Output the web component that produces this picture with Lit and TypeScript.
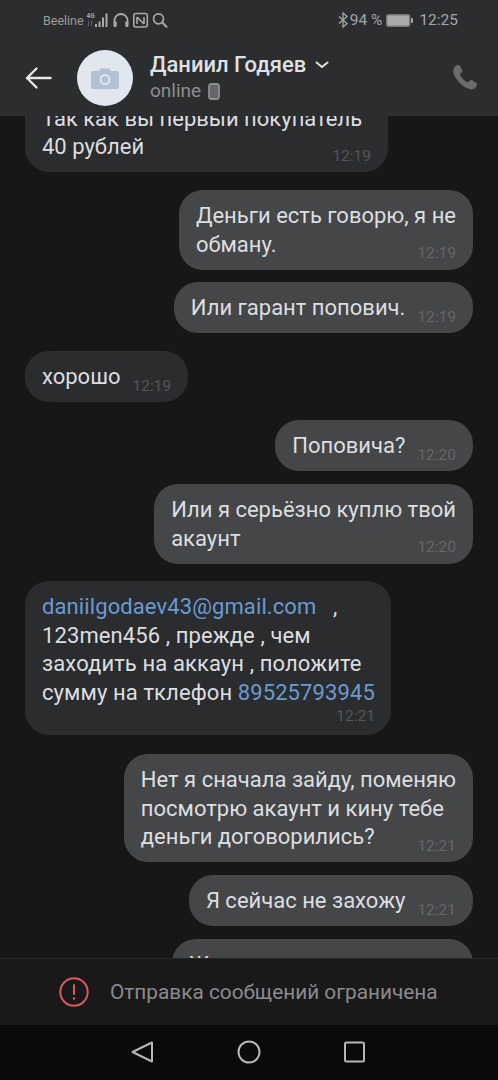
import { LitElement, html, css } from "lit";
import { customElement } from "lit/decorators.js";

type Msg = { out?: boolean; lines: unknown[]; time: string; cls?: string };

const link = (t: string) => html`<span class="link">${t}</span>`;

const MSGS: Msg[] = [
  { lines: ["Так как вы первый покупатель", "40 рублей"], time: "12:19", cls: "w1" },
  { out: true, lines: ["Деньги есть говорю, я не", "обману."], time: "12:19", cls: "g18" },
  { out: true, lines: ["Или гарант попович."], time: "12:19", cls: "g12" },
  { lines: ["хорошо"], time: "12:19", cls: "g18" },
  { out: true, lines: ["Поповича?"], time: "12:20", cls: "g18" },
  { out: true, lines: ["Или я серьёзно куплю твой", "акаунт"], time: "12:20", cls: "g13" },
  {
    lines: [
      html`${link("daniilgodaev43@gmail.com")}&nbsp;&nbsp;&nbsp;,`,
      "123men456 , прежде , чем",
      "заходить на аккаун , положите",
      html`сумму на тклефон ${link("89525793945")}`,
    ],
    time: "12:21",
    cls: "g17 own",
  },
  { out: true, lines: ["Нет я сначала зайду, поменяю", "посмотрю акаунт и кину тебе", "деньги договорились?"], time: "12:21", cls: "g19" },
  { out: true, lines: ["Я сейчас не захожу"], time: "12:21", cls: "g13" },
  { out: true, lines: ["Жду, пока ты там"], time: "12:21", cls: "g12 w10" },
];

@customElement("app-root")
export class AppRoot extends LitElement {
  static styles = css`
    :host {
      display: flex;
      flex-direction: column;
      width: 498px;
      height: 1080px;
      overflow: hidden;
      background: #171718;
      font-family: Roboto, "Liberation Sans", sans-serif;
      color: #dcdee1;
    }
    .top {
      flex: none;
      height: 116px;
      background: #2c2d2f;
      display: flex;
      flex-direction: column;
      position: relative;
      z-index: 1;
    }
    .status {
      height: 40px;
      display: flex;
      align-items: center;
      justify-content: space-between;
      padding: 0 40px 0 43px;
    }
    .st-l, .st-r { display: flex; align-items: center; }
    .carrier { font-size: 12.5px; color: #9a9b9d; margin-right: 2px; }
    .st-r { font-size: 15.5px; color: #a5a6a8; }
    .batt { margin-left: 4px; }
    .bt { margin-right: 2px; }
    .clock { margin-left: 5px; }
    .bar {
      flex: 1;
      display: flex;
      align-items: flex-start;
      padding-left: 24px;
      padding-right: 18px;
    }
    .back { margin-top: 26px; flex: none; }
    .avatar {
      flex: none;
      width: 56px;
      height: 56px;
      border-radius: 50%;
      background: #e0e7ee;
      margin: 10px 0 0 25px;
      display: flex;
      align-items: center;
      justify-content: center;
    }
    .who { flex: 1; margin: 11px 0 0 17px; }
    .name {
      font-size: 22px;
      line-height: 28px;
      font-weight: 500;
      color: #dfe1e4;
      display: flex;
      align-items: center;
      gap: 9px;
    }
    .online {
      font-size: 19px;
      line-height: 24px;
      color: #8d8e90;
      display: flex;
      align-items: center;
      gap: 7px;
    }
    .phone { margin-top: 22px; flex: none; }
    .chat { flex: 1; min-height: 0; overflow: hidden; }
    .list {
      margin-top: -23.5px;
      padding: 0 25px;
      display: flex;
      flex-direction: column;
    }
    .msg {
      align-self: flex-start;
      background: #2b2c2e;
      border-radius: 24px;
      padding: 12px 17px 10.5px;
      font-size: 22px;
      line-height: 28.5px;
      white-space: nowrap;
      display: flex;
      flex-direction: column;
    }
    .msg.out { align-self: flex-end; background: #454647; }
    .w1 { width: 329px; }
    .w10 { width: 267px; }
    .g12 { margin-top: 12.5px; }
    .g13 { margin-top: 13px; }
    .g17 { margin-top: 17.5px; }
    .g18 { margin-top: 18px; }
    .g19 { margin-top: 19px; }
    .line { display: flex; justify-content: space-between; }
    .time {
      flex: none;
      margin-left: 12px;
      align-self: flex-end;
      font-size: 15.5px;
      line-height: 19px;
      margin-bottom: -4px;
      color: #545557;
    }
    .out .time { color: #656668; }
    .own { letter-spacing: 0.1px; padding-right: 16px; }
    .own .stamp { display: flex; justify-content: flex-end; height: 17.5px; }
    .own .time { margin-bottom: -1px; letter-spacing: 0; }
    .link { color: #6a9bd2; }
    .foot {
      flex: none;
      height: 66px;
      border-top: 1px solid #262628;
      background: #19191a;
      display: flex;
      align-items: center;
      padding-left: 59px;
      gap: 21px;
      font-size: 20.8px;
      color: #8a8b8d;
    }
    .nav {
      flex: none;
      height: 55px;
      background: #0a0a0a;
      display: flex;
      align-items: center;
      padding-left: 131px;
      padding-bottom: 2px;
      box-sizing: border-box;
    }
    .nav svg { display: block; }
  `;

  private bubble(m: Msg) {
    const t = html`<span class="time">${m.time}</span>`;
    const own = (m.cls ?? "").includes("own");
    const last = m.lines.length - 1;
    return html`<div class="msg ${m.out ? "out" : ""} ${m.cls ?? ""}">
      ${m.lines.map((l, i) =>
        i === last && !own
          ? html`<div class="line"><span>${l}</span>${t}</div>`
          : html`<div>${l}</div>`
      )}
      ${own ? html`<div class="stamp">${t}</div>` : ""}
    </div>`;
  }

  render() {
    return html`
      <div class="top">
        <div class="status">
          <div class="st-l">
            <span class="carrier">Beeline</span>
            <svg width="82" height="16" viewBox="0 0 82 16">
              <text x="0.500" y="5.500" font-size="6.500" font-weight="700" fill="#a0a1a3" font-family="Roboto">4G</text>
              <path d="M2.500 9v5M5.500 9v5" stroke="#66676a" stroke-width="1"/>
              <g fill="#a8a9ab">
                <rect x="9" y="12" width="2" height="3"/>
                <rect x="12.500" y="9.500" width="2" height="5.500"/>
                <rect x="16" y="5.500" width="2" height="9.500"/>
                <rect x="19.500" y="1.500" width="2" height="13.500"/>
              </g>
              <path d="M28.500 11V8.500a6.500 6.500 0 0 1 13 0V11" fill="none" stroke="#a8a9ab" stroke-width="1.800"/>
              <rect x="27.500" y="9.500" width="3.200" height="5.500" rx="1" fill="#a8a9ab"/>
              <rect x="39.300" y="9.500" width="3.200" height="5.500" rx="1" fill="#a8a9ab"/>
              <rect x="47.800" y="1.500" width="13.500" height="13.500" rx="2" fill="none" stroke="#a8a9ab" stroke-width="1.600"/>
              <path d="M51 5v7M51 5l7 7M58 5v7" fill="none" stroke="#a8a9ab" stroke-width="1.600"/>
              <circle cx="72.500" cy="6.800" r="5" fill="none" stroke="#a8a9ab" stroke-width="1.700"/>
              <path d="M76.200 10.500l4.300 4.300" stroke="#a8a9ab" stroke-width="2" stroke-linecap="round"/>
            </svg>
          </div>
          <div class="st-r">
            <svg class="bt" width="10" height="16" viewBox="0 0 10 16">
              <path d="M1 4.500l8 7-4 3.500V1l4 3.500-8 7" fill="none" stroke="#a5a6a8" stroke-width="1.300"/>
            </svg>
            <span>94 %</span>
            <svg class="batt" width="28" height="13" viewBox="0 0 28 13">
              <rect x="0.700" y="0.700" width="23" height="11.600" rx="2" fill="#a8a9ab" stroke="#77787a" stroke-width="1.400"/>
              <rect x="25" y="4" width="2" height="5" rx="0.800" fill="#a5a6a8"/>
            </svg>
            <span class="clock">12:25</span>
          </div>
        </div>
        <div class="bar">
          <svg class="back" width="28" height="24" viewBox="0 0 28 24">
            <path d="M26.500 12H3M12.500 2.500 3 12l9.500 9.500" fill="none" stroke="#e6e7e9" stroke-width="2.400" stroke-linecap="round" stroke-linejoin="round"/>
          </svg>
          <div class="avatar">
            <svg width="28" height="21" viewBox="0 0 28 21">
              <path d="M2.500 3H8L9.500.500h9L20 3h5.500A2.500 2.500 0 0 1 28 5.500V18.500A2.500 2.500 0 0 1 25.500 21H2.500A2.500 2.500 0 0 1 0 18.500V5.500A2.500 2.500 0 0 1 2.500 3Z" fill="#b1c1d1"/>
              <circle cx="14" cy="11.500" r="4.500" fill="none" stroke="#e0e7ee" stroke-width="2"/>
            </svg>
          </div>
          <div class="who">
            <div class="name">Даниил Годяев
              <svg width="14" height="8" viewBox="0 0 14 8"><path d="M1.500 1.500 7 6l5.500-4.500" fill="none" stroke="#dfe1e4" stroke-width="2" stroke-linecap="round" stroke-linejoin="round"/></svg>
            </div>
            <div class="online">online
              <svg width="12" height="17" viewBox="0 0 12 17"><rect x="1" y="1" width="10" height="15" rx="2.200" fill="#66676a" stroke="#8d8e90" stroke-width="1.800"/></svg>
            </div>
          </div>
          <svg class="phone" width="31" height="31" viewBox="0 0 24 24">
            <path d="M6.600 2.400c.7-.3 1.500 0 1.900.7l1.600 3.100c.3.7.2 1.500-.4 2L8.400 9.400c.9 2.400 3.500 5.200 6.200 6.400l1.300-1.300c.5-.5 1.300-.7 2-.3l3 1.800c.7.4 1 1.200.7 1.900-.7 1.800-2 3.200-3.800 3.300C11 20.800 3 12 3.300 6.400c.1-1.900 1.500-3.300 3.300-4Z" fill="#6b6c6e"/>
          </svg>
        </div>
      </div>
      <div class="chat">
        <div class="list">${MSGS.map((m) => this.bubble(m))}</div>
      </div>
      <div class="foot">
        <svg width="30" height="30" viewBox="0 0 30 30">
          <circle cx="15" cy="15" r="13.700" fill="none" stroke="#d9595c" stroke-width="2"/>
          <path d="M15 8v9" stroke="#d9595c" stroke-width="2" stroke-linecap="round"/>
          <circle cx="15" cy="21.500" r="1.300" fill="#d9595c"/>
        </svg>
        <span>Отправка сообщений ограничена</span>
      </div>
      <div class="nav">
        <svg width="234" height="24" viewBox="0 0 234 24">
          <path d="M21 2.500v19L1.500 12Z" fill="none" stroke="#b5b6b8" stroke-width="2" stroke-linejoin="round"/>
          <circle cx="118" cy="12" r="10.500" fill="none" stroke="#b5b6b8" stroke-width="2"/>
          <rect x="214" y="2.500" width="19" height="19" rx="1.500" fill="none" stroke="#b5b6b8" stroke-width="2"/>
        </svg>
      </div>
    `;
  }
}
